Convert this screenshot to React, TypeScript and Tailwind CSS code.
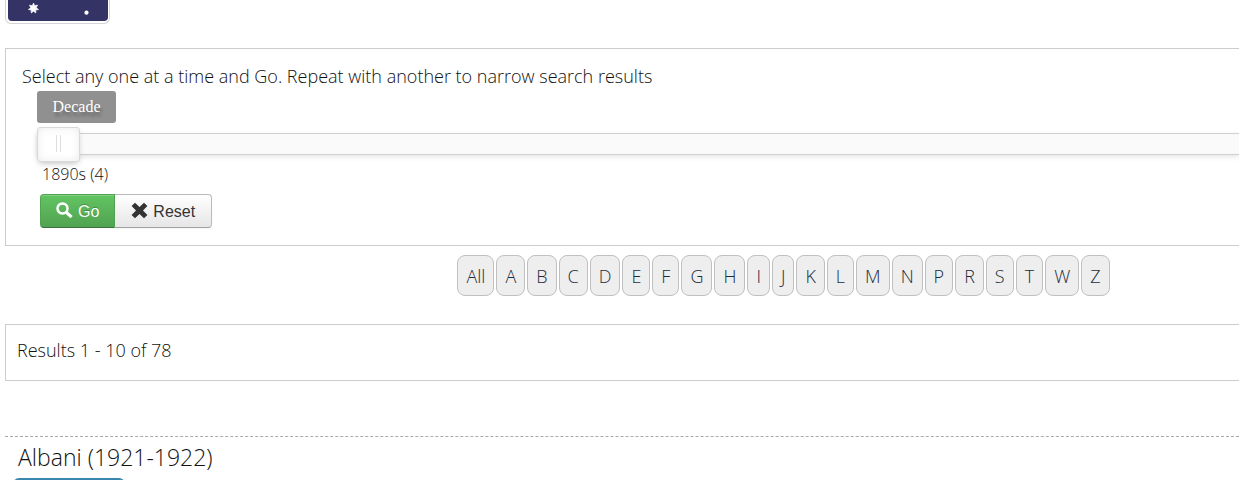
const letters = [
  "All",
  "A",
  "B",
  "C",
  "D",
  "E",
  "F",
  "G",
  "H",
  "I",
  "J",
  "K",
  "L",
  "M",
  "N",
  "P",
  "R",
  "S",
  "T",
  "W",
  "Z",
];

function FlagThumbnail() {
  return (
    <a
      href="#australia"
      aria-label="Australia"
      className="block h-6 w-[105px] rounded-b-md border border-t-0 border-[#d5d5d5] pr-px pb-0.5 pl-0.5"
    >
      <svg
        viewBox="0 0 100 21"
        className="block h-[21px] w-full rounded-b-sm bg-[#333366]"
      >
        <path
          fill="#fff"
          stroke="#fff"
          strokeWidth="0.6"
          d="M25.5 3.1L26.8 5.7 29.6 5.1 28.3 7.7 30.6 9.5 27.8 10.1 27.8 13 25.5 11.2 23.2 13 23.2 10.1 20.4 9.5 22.7 7.7 21.4 5.1 24.2 5.7z"
        />
        <circle cx="78.5" cy="12.7" r="2.1" fill="#fff" />
      </svg>
    </a>
  );
}

function SearchIcon() {
  return (
    <svg viewBox="0 0 17 17" className="mb-0.5 h-[17px] w-[17px]" fill="none">
      <circle cx="6.5" cy="6.5" r="5" stroke="#fff" strokeWidth="2.5" />
      <path d="M10.3 10.3l5.3 4.9" stroke="#fff" strokeWidth="3.2" />
    </svg>
  );
}

function CloseIcon() {
  return (
    <svg viewBox="0 0 17 17" className="mb-0.5 h-[17px] w-[17px]">
      <path
        fill="#333"
        d="M4 .8L8.5 5 13 .8l3.4 3.1-4.4 4.500 4.400 4.500L13 16.200 8.500 12 4 16.200.6 12.900 5 8.400.6 3.900z"
      />
    </svg>
  );
}

function SearchFilter() {
  return (
    <form
      className="mt-6 border border-r-0 border-[#ccc] pt-[13px] pb-[17px] pl-4"
      onSubmit={(e) => e.preventDefault()}
    >
      <p className="mb-px text-[18px] leading-7">
        Select any one at a time and Go. Repeat with another to narrow search
        results
      </p>

      <div className="pl-[15px]">
        <label
          htmlFor="decade"
          className="block h-8 w-[79px] rounded-[3px] bg-[#909090] text-center font-['Liberation_Serif',serif] text-[16px] leading-8 text-white [text-shadow:2px_4px_3px_rgba(0,0,0,0.3)]"
        >
          Decade
        </label>
        <input
          id="decade"
          type="range"
          min={0}
          max={10}
          defaultValue={0}
          className="mt-[3px] mb-px block h-[35px] w-full appearance-none bg-transparent [&::-webkit-slider-runnable-track]:h-[22px] [&::-webkit-slider-runnable-track]:border [&::-webkit-slider-runnable-track]:border-r-0 [&::-webkit-slider-runnable-track]:border-[#d0d0d0] [&::-webkit-slider-runnable-track]:bg-[#fafafa] [&::-webkit-slider-runnable-track]:shadow-[0_2px_5px_rgba(0,0,0,0.1)] [&::-webkit-slider-thumb]:-mt-[7px] [&::-webkit-slider-thumb]:-ml-px [&::-webkit-slider-thumb]:h-[35px] [&::-webkit-slider-thumb]:w-[43px] [&::-webkit-slider-thumb]:appearance-none [&::-webkit-slider-thumb]:rounded-[3px] [&::-webkit-slider-thumb]:border [&::-webkit-slider-thumb]:border-[#d9d9d9] [&::-webkit-slider-thumb]:bg-white [&::-webkit-slider-thumb]:bg-[linear-gradient(90deg,#ddd_1px,transparent_1px_4px,#ddd_4px)] [&::-webkit-slider-thumb]:bg-[length:5px_17px] [&::-webkit-slider-thumb]:bg-[position:center_7px] [&::-webkit-slider-thumb]:bg-no-repeat [&::-webkit-slider-thumb]:shadow-[inset_0_0_8px_#ebebeb,0_3px_6px_-2px_#bbb]"
        />
        <output htmlFor="decade" className="block pl-[5px] text-[16px] leading-6">
          1890s (4)
        </output>

        <div className="mt-2 flex pl-[3px] font-['Liberation_Sans',sans-serif] text-[16px]">
          <button
            type="submit"
            className="flex h-[34px] items-center gap-[5px] rounded-l border border-[#51a351] border-b-[#387038] bg-linear-to-b from-[#62c462] to-[#51a351] px-[15px] pt-px text-white shadow-[inset_0_1px_0_rgba(255,255,255,0.2)] [text-shadow:0_-1px_0_rgba(0,0,0,0.25)]"
          >
            <SearchIcon /> Go
          </button>
          <button
            type="reset"
            className="flex h-[34px] items-center gap-[5px] rounded-r border border-l-0 border-[#bbb] border-b-[#a2a2a2] bg-linear-to-b from-white to-[#e6e6e6] px-4 pt-px text-[#333] shadow-[0_1px_2px_rgba(0,0,0,0.05)]"
          >
            <CloseIcon /> Reset
          </button>
        </div>
      </div>
    </form>
  );
}

export default function App() {
  return (
    <main className="min-h-screen overflow-x-hidden bg-white pl-[5px] font-['Open_Sans','Noto_Sans',sans-serif] font-light text-[#111]">
      <FlagThumbnail />
      <SearchFilter />

      <nav
        aria-label="Alphabetical index"
        className="mt-[9px] flex justify-center gap-0.5 pl-[323px]"
      >
        {letters.map((letter) => (
          <a
            key={letter}
            href={`#${letter}`}
            className="h-[41px] rounded-lg border border-[#c0c0c0] bg-[#eee] px-2 text-[18px] leading-[41px] text-[#1c2c3c]"
          >
            {letter}
          </a>
        ))}
      </nav>

      <section className="mt-7 border border-r-0 border-[#ccc] pt-[11px] pb-4 pl-[11px]">
        <p className="text-[18px] leading-7">Results 1 - 10 of 78</p>
      </section>

      <article className="mt-[55px] h-11 overflow-hidden border-t border-dashed border-[#aaa] pl-[13px]">
        <h2 className="mb-px text-[23px] leading-10">Albani (1921-1922)</h2>
        <div className="-ml-[5px] h-8 w-[112px] rounded-md bg-[#3a87ad]" />
      </article>
    </main>
  );
}
